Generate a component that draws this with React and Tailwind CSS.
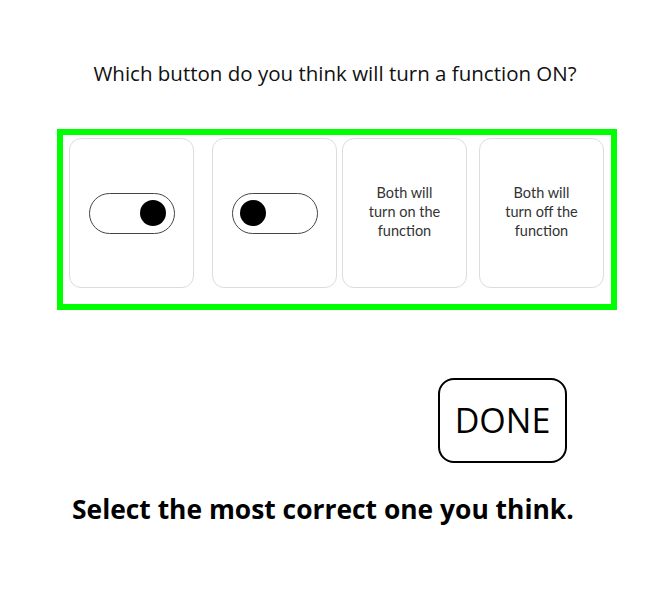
import React from 'react'

const Toggle = ({ on }) => {
  return (
    <div className={`w-[86px] h-[41px] rounded-full border-[1.5px] border-[#444] flex items-center px-[7.5px] ${on ? 'justify-end' : 'justify-start'}`}>
      <div className="w-[26px] h-[26px] rounded-full bg-black"></div>
    </div>
  )
}

const Card = ({ children, className = '' }) => {
  return (
    <div className={`w-[125px] h-[150px] shrink-0 rounded-[12px] border border-[#dcdcdc] bg-white flex items-center justify-center ${className}`}>
      {children}
    </div>
  )
}

const App = () => {
  return (
    <div className="w-[670px] h-[611px] bg-white text-black" style={{ fontFamily: '"Open Sans", "Noto Sans", sans-serif' }}>
      <p className="pt-[59px] text-center text-[20.5px] leading-[28px] text-[#111]">
        Which button do you think will turn a function ON?
      </p>

      <div className="ml-[57px] mt-[42px] w-[560px] h-[181px] border-[6px] border-[#00ff00] flex pl-[6px] pt-[3px]">
        <Card>
          <Toggle on />
        </Card>
        <Card className="ml-[18px]">
          <Toggle />
        </Card>
        <Card className="ml-[5px]">
          <p className="font-['Lato'] text-center text-[14.5px] leading-[19px] text-[#333] pb-[4px]">
            Both will<br />turn on the<br />function
          </p>
        </Card>
        <Card className="ml-[12px]">
          <p className="font-['Lato'] text-center text-[14.5px] leading-[19px] text-[#333] pb-[4px]">
            Both will<br />turn off the<br />function
          </p>
        </Card>
      </div>

      <button className="ml-[438px] mt-[68px] w-[129px] h-[85px] rounded-[16px] border-2 border-black flex items-center justify-center text-[34px] text-black">
        DONE
      </button>

      <p className="mt-[28px] ml-[72px] text-[26.4px] font-bold leading-[36px]">
        Select the most correct one you think.
      </p>
    </div>
  )
}

export default App
